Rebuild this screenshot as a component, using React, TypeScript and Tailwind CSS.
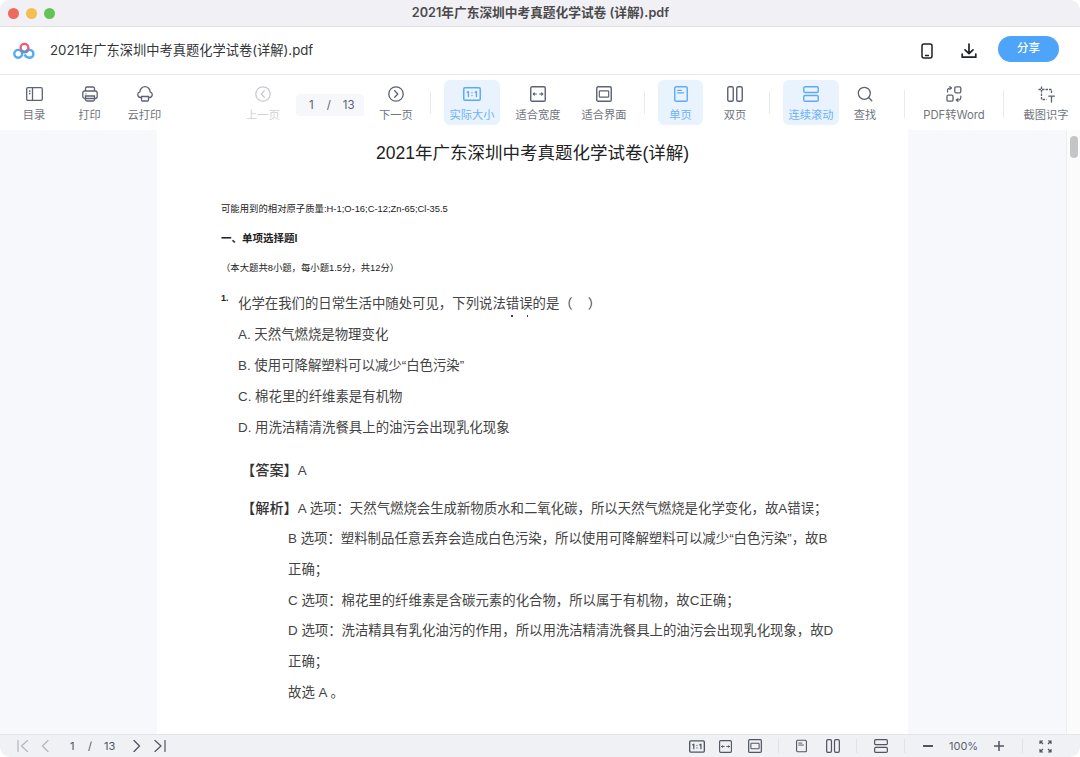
import React from "react";

const FONT = "[font-family:Inter,'Noto_Sans_CJK_SC',sans-serif]";
const DOC = "[font-family:'Liberation_Sans','Noto_Sans_CJK_SC',sans-serif]";

const OneOne = ({ small }: { small?: boolean }) => (
  <svg width={small ? 16 : 18} height={small ? 13 : 14} viewBox="0 0 18 14" fill="none">
    <rect x="0.75" y="0.75" width="16.5" height="12.5" rx="1.2" stroke="currentColor" strokeWidth="1.5" />
    <path d="M4.2 5.2 5.4 4.5v5M12.2 5.200l1.200-.7v5M9 5.600v.1M9 8.500v.1" stroke="currentColor" strokeWidth="1.4" strokeLinecap="round" strokeLinejoin="round" />
  </svg>
);
const FitWidth = ({ s = 16 }: { s?: number }) => (
  <svg width={s} height={s} viewBox="0 0 16 16" fill="none">
    <rect x="0.75" y="0.75" width="14.5" height="14.5" rx="1.3" stroke="currentColor" strokeWidth="1.4" />
    <path d="M3.200 8h3.300M9.500 8h3.300M3.200 8l1.200-1.200M3.200 8l1.200 1.200M12.800 8l-1.200-1.200M12.800 8l-1.200 1.200" stroke="currentColor" strokeWidth="1.100" strokeLinecap="round" />
  </svg>
);
const FitPage = ({ s = 16 }: { s?: number }) => (
  <svg width={s} height={s} viewBox="0 0 16 16" fill="none">
    <rect x="0.75" y="0.75" width="14.5" height="14.5" rx="1.3" stroke="currentColor" strokeWidth="1.4" />
    <rect x="3.300" y="4.800" width="9.400" height="6.400" rx="0.8" stroke="currentColor" strokeWidth="1.200" />
  </svg>
);
const Single = ({ w = 14, h = 16 }: { w?: number; h?: number }) => (
  <svg width={w} height={h} viewBox="0 0 14 16" fill="none">
    <rect x="0.75" y="0.75" width="12.5" height="14.5" rx="1.3" stroke="currentColor" strokeWidth="1.4" />
    <path d="M3.600 4.300h3.800M3.600 6.800h6" stroke="currentColor" strokeWidth="1.200" strokeLinecap="round" />
  </svg>
);
const Double = ({ w = 16, h = 16 }: { w?: number; h?: number }) => (
  <svg width={w} height={h} viewBox="0 0 16 16" fill="none">
    <rect x="0.75" y="0.75" width="5.500" height="14.5" rx="1.5" stroke="currentColor" strokeWidth="1.4" />
    <rect x="9.750" y="0.75" width="5.500" height="14.5" rx="1.5" stroke="currentColor" strokeWidth="1.4" />
  </svg>
);
const Scroll = ({ w = 16, h = 16 }: { w?: number; h?: number }) => (
  <svg width={w} height={h} viewBox="0 0 16 16" fill="none">
    <rect x="0.75" y="0.75" width="14.5" height="5.750" rx="1.3" stroke="currentColor" strokeWidth="1.4" />
    <rect x="0.75" y="9.500" width="14.5" height="5.750" rx="1.3" stroke="currentColor" strokeWidth="1.4" />
  </svg>
);

function Tool({ icon, label, w, ml = 0, active, faded }: { icon: React.ReactNode; label: string; w: number; ml?: number; active?: boolean; faded?: boolean }) {
  const color = active ? "text-[#5fa9f6] bg-[#e9f3fe]" : faded ? "text-[#c9cbd0]" : "text-[#5c6270]";
  const text = active ? "text-[#6db2f8]" : faded ? "text-[#d2d3d6]" : "text-[#70747c]";
  return (
    <div style={{ width: w, marginLeft: ml }} className={`h-[45px] rounded-md flex flex-col items-center shrink-0 ${color}`}>
      <div className="h-[28px] flex items-center justify-center">{icon}</div>
      <div className={`text-[11.25px] leading-[14px] whitespace-nowrap ${text}`}>{label}</div>
    </div>
  );
}
const Sep = ({ ml, tall }: { ml: number; tall?: boolean }) => (
  <div style={{ marginLeft: ml }} className={`w-px bg-[#e9eaec] shrink-0 ${tall ? "h-[28px] mt-[10px]" : "h-[23px] mt-[11px]"}`} />
);
const BarSep = ({ ml }: { ml: number }) => <div style={{ marginLeft: ml }} className="w-px h-[14px] bg-[#e2e3e7] shrink-0" />;

function Q({ children, cls = "", tight }: { children: React.ReactNode; cls?: string; tight?: boolean }) {
  return <div className={`text-[13.4px] ${tight ? "leading-[30.8px]" : "leading-[31px]"} text-[#444] whitespace-nowrap ${cls}`}>{children}</div>;
}
const Tag = ({ children }: { children: React.ReactNode }) => (
  <span className="text-[14.2px] font-medium text-[#333]">{children}</span>
);

export default function App() {
  return (
    <div className={`w-[1080px] h-[757px] bg-white overflow-hidden flex flex-col ${FONT}`}>
      <div className="h-[27px] shrink-0 bg-[#f1f0f4] border-b border-[#dfdfe1] rounded-t-[10px] flex items-center">
        <div className="flex items-center gap-[7px] ml-[8px]">
          <div className="w-[11px] h-[11px] rounded-full bg-[#ee6a5f]" />
          <div className="w-[11px] h-[11px] rounded-full bg-[#f5bf4f]" />
          <div className="w-[11px] h-[11px] rounded-full bg-[#61c554]" />
        </div>
        <div className="flex-1 text-center text-[12.7px] font-semibold text-[#4a4a4c] pr-[54px] pb-[1px] whitespace-nowrap">2021年广东深圳中考真题化学试卷 (详解).pdf</div>
      </div>

      <div className="h-[48px] shrink-0 border-b border-[#e8e8ea] flex items-center">
        <svg width="23" height="18" viewBox="0 0 23 18" fill="none" className="ml-[13px]">
          <circle cx="5.200" cy="11.800" r="3.900" stroke="#55aaf4" strokeWidth="2.400" />
          <path d="M11.500 12.500c1 2 2.800 3.200 5 3.200a3.900 3.900 0 1 0-3.600-5.400" stroke="#55aaf4" strokeWidth="2.400" />
          <circle cx="11.500" cy="5.800" r="3.900" stroke="#ea5f73" strokeWidth="2.400" />
          <path d="M8.200 8.500a3.900 3.900 0 0 0 6.600 0" stroke="#4c98e6" strokeWidth="2.400" />
        </svg>
        <div className="ml-[14px] text-[13.25px] text-[#333538] whitespace-nowrap">2021年广东深圳中考真题化学试卷(详解).pdf</div>
        <div className="flex-1" />
        <svg width="12" height="16" viewBox="0 0 12 16" fill="none" className="text-[#1f2227]">
          <rect x="1" y="1" width="10" height="14" rx="2" stroke="currentColor" strokeWidth="1.500" />
          <path d="M4.500 12.500h3" stroke="currentColor" strokeWidth="1.300" strokeLinecap="round" />
        </svg>
        <svg width="16" height="16" viewBox="0 0 16 16" fill="none" className="ml-[28px] text-[#1f2227]">
          <path d="M8 1v9M4 6.800l4 3.800 4-3.800M1.200 11v3.200h13.600V11" stroke="currentColor" strokeWidth="1.700" strokeLinecap="round" strokeLinejoin="round" />
        </svg>
        <div className="ml-[21px] mr-[21px] -mt-[3px] w-[61px] h-[26px] rounded-full bg-[#4ea4f8] text-white text-[11.5px] font-medium flex items-center justify-center">分享</div>
      </div>

      <div className="h-[55px] shrink-0 flex items-start pt-[5px]">
        <Tool w={56} ml={6} label="目录" icon={
          <svg width="17" height="14" viewBox="0 0 17 14" fill="none"><rect x="0.700" y="0.700" width="15.600" height="12.600" rx="1.200" stroke="currentColor" strokeWidth="1.300" /><path d="M6.500 1v12M3 4h1.500M3 6.500h1.500" stroke="currentColor" strokeWidth="1.300" /></svg>
        } />
        <Tool w={55} label="打印" icon={
          <svg width="16" height="16" viewBox="0 0 16 16" fill="none"><path d="M3.500 5V2.500A1.500 1.500 0 0 1 5 1h6a1.500 1.500 0 0 1 1.500 1.500V5" stroke="currentColor" strokeWidth="1.300" /><rect x="0.800" y="5" width="14.400" height="7.500" rx="2" stroke="currentColor" strokeWidth="1.300" /><path d="M3.500 10v3.500A1.500 1.500 0 0 0 5 15h6a1.500 1.500 0 0 0 1.500-1.500V10zM3.500 7.800h1" stroke="currentColor" strokeWidth="1.300" /></svg>
        } />
        <Tool w={55} label="云打印" icon={
          <svg width="16" height="16" viewBox="0 0 16 16" fill="none"><path d="M4 11.500H3.500a2.900 2.900 0 0 1-.6-5.700 5.100 5.100 0 0 1 10.200 0 2.900 2.900 0 0 1-.6 5.700H12" stroke="currentColor" strokeWidth="1.300" strokeLinecap="round" /><path d="M4.500 10.500h7v3.500a1 1 0 0 1-1 1h-5a1 1 0 0 1-1-1z" stroke="currentColor" strokeWidth="1.300" /></svg>
        } />
        <Tool w={56} ml={63} faded label="上一页" icon={
          <svg width="16" height="16" viewBox="0 0 16 16" fill="none"><circle cx="8" cy="8" r="7.200" stroke="currentColor" strokeWidth="1.300" /><path d="M9.300 4.800 6.200 8l3.100 3.200" stroke="currentColor" strokeWidth="1.300" strokeLinecap="round" strokeLinejoin="round" /></svg>
        } />
        <div className="ml-[5px] mt-[14px] w-[68px] h-[22px] rounded bg-[#f6f7fb] flex items-center text-[11.5px] text-[#5c6270] shrink-0 pt-[2px]">
          <span className="ml-[13px]">1</span><span className="ml-[13px]">/</span><span className="ml-[12px]">13</span>
        </div>
        <Tool w={56} ml={4} label="下一页" icon={
          <svg width="16" height="16" viewBox="0 0 16 16" fill="none"><circle cx="8" cy="8" r="7.200" stroke="currentColor" strokeWidth="1.300" /><path d="M6.700 4.800 9.800 8l-3.100 3.200" stroke="currentColor" strokeWidth="1.300" strokeLinecap="round" strokeLinejoin="round" /></svg>
        } />
        <Sep ml={6} />
        <Tool w={56} ml={13} active label="实际大小" icon={<OneOne />} />
        <Tool w={56} ml={10} label="适合宽度" icon={<FitWidth />} />
        <Tool w={56} ml={10} label="适合界面" icon={<FitPage />} />
        <Sep ml={12} />
        <Tool w={45} ml={13} active label="单页" icon={<Single />} />
        <Tool w={46} ml={9} label="双页" icon={<Double />} />
        <Sep ml={11} />
        <Tool w={56} ml={13} active label="连续滚动" icon={<Scroll />} />
        <Tool w={46} ml={3} label="查找" icon={
          <svg width="16" height="16" viewBox="0 0 16 16" fill="none"><circle cx="7.300" cy="7.300" r="6" stroke="currentColor" strokeWidth="1.300" /><path d="m11.800 11.800 3 3" stroke="currentColor" strokeWidth="1.300" strokeLinecap="round" /></svg>
        } />
        <Sep ml={16} tall />
        <Tool w={80} ml={9} label="PDF转Word" icon={
          <svg width="16" height="16" viewBox="0 0 16 16" fill="none"><rect x="8.800" y="0.800" width="6" height="6" rx="1.200" stroke="currentColor" strokeWidth="1.300" /><rect x="1" y="9.200" width="6" height="6" rx="1.200" stroke="currentColor" strokeWidth="1.300" /><path d="M1.500 6V4.500a2.500 2.500 0 0 1 2.500-2.500h1.500M3.800 0.600 5.600 2 3.800 3.400M14.800 10v1.500a2.500 2.500 0 0 1-2.500 2.500H10.500M12 12.600 10.200 14l1.800 1.400" stroke="currentColor" strokeWidth="1.200" strokeLinecap="round" strokeLinejoin="round" /></svg>
        } />
        <Sep ml={9} tall />
        <Tool w={56} ml={14} label="截图识字" icon={
          <svg width="17" height="17" viewBox="0 0 17 17" fill="none"><path d="M3.500 0.500v13h5M0.500 3.500h13v4" stroke="currentColor" strokeWidth="1.300" strokeDasharray="2.500 1" /><path d="M10.800 10.200h5.500M13.500 10.200v5.800" stroke="currentColor" strokeWidth="1.300" strokeLinecap="round" /></svg>
        } />
      </div>

      <div className="flex-1 min-h-0 flex bg-[#f7f8fc]">
        <div className="w-[157px] shrink-0" />
        <div className={`w-[751px] shrink-0 bg-white overflow-hidden relative ${DOC}`}>
          <div className="h-[47px] pt-[10px] text-center text-[17.5px] leading-[27px] text-[#222]">2021年广东深圳中考真题化学试卷(详解)</div>
          <div className="pl-[64px] text-[#222]">
            <div className="mt-[26px] text-[9.37px] leading-[12px] whitespace-nowrap">可能用到的相对原子质量:H-1;O-16;C-12;Zn-65;Cl-35.5</div>
            <div className="mt-[17px] text-[10.5px] leading-[13px] font-bold whitespace-nowrap">一、单项选择题I</div>
            <div className="mt-[17px] text-[9.35px] leading-[12px] whitespace-nowrap">（本大题共8小题，每小题1.5分，共12分）</div>
            <div className="flex mt-[14px] h-[32px]">
              <div className="text-[9px] leading-[10px] font-bold mt-[5px] w-[17px]">1.</div>
              <Q>化学在我们的日常生活中随处可见，下列说法错误的是（&nbsp;&nbsp;&nbsp;&nbsp;）</Q>
            </div>
            <div className="pl-[17px] -mt-[1px]">
              <Q>A. 天然气燃烧是物理变化</Q>
              <Q>B. 使用可降解塑料可以减少“白色污染”</Q>
              <Q>C. 棉花里的纤维素是有机物</Q>
              <Q>D. 用洗洁精清洗餐具上的油污会出现乳化现象</Q>
            </div>
            <div className="pl-[20px]">
              <Q cls="mt-[12px]"><Tag>【答案】</Tag>A</Q>
              <Q cls="mt-[7px]"><Tag>【解析】</Tag>A 选项：天然气燃烧会生成新物质水和二氧化碳，所以天然气燃烧是化学变化，故A错误；</Q>
            </div>
            <div className="pl-[67px]">
              <Q tight>B 选项：塑料制品任意丢弃会造成白色污染，所以使用可降解塑料可以减少“白色污染”，故B</Q>
              <Q tight>正确；</Q>
              <Q tight>C 选项：棉花里的纤维素是含碳元素的化合物，所以属于有机物，故C正确；</Q>
              <Q tight>D 选项：洗洁精具有乳化油污的作用，所以用洗洁精清洗餐具上的油污会出现乳化现象，故D</Q>
              <Q tight>正确；</Q>
              <Q tight>故选 A 。</Q>
            </div>
          </div>
          <div className="absolute left-[354px] top-[185px] flex gap-[14px]">
            <div className="w-[1.5px] h-[1.5px] bg-[#444]" />
            <div className="w-[1.5px] h-[1.5px] bg-[#444]" />
          </div>
        </div>
        <div className="flex-1" />
        <div className="w-[14px] shrink-0 bg-[#fbfbfc] border-l border-[#eeeef0] pt-[6px] flex justify-center">
          <div className="w-[8px] h-[22px] rounded-full bg-[#c4c5c7]" />
        </div>
      </div>

      <div className="h-[23px] shrink-0 bg-[#f0f1f5] border-t border-[#e6e6ea] rounded-b-[10px] flex items-center text-[#4f5563]">
        <svg width="12" height="12" viewBox="0 0 12 12" fill="none" className="ml-[17px] text-[#b4b6bc]"><path d="M1 0.500v11M10.500 0.500 4.500 6l6 5.500" stroke="currentColor" strokeWidth="1.200" strokeLinecap="round" strokeLinejoin="round" /></svg>
        <svg width="8" height="12" viewBox="0 0 8 12" fill="none" className="ml-[12px] text-[#b4b6bc]"><path d="M7 0.500 1.500 6 7 11.500" stroke="currentColor" strokeWidth="1.200" strokeLinecap="round" strokeLinejoin="round" /></svg>
        <span className="ml-[21px] text-[11px] w-[5px]">1</span>
        <span className="ml-[13px] text-[11px]">/</span>
        <span className="ml-[12px] text-[11px]">13</span>
        <svg width="8" height="12" viewBox="0 0 8 12" fill="none" className="ml-[18px]"><path d="M1 0.500 6.500 6 1 11.500" stroke="currentColor" strokeWidth="1.300" strokeLinecap="round" strokeLinejoin="round" /></svg>
        <svg width="12" height="12" viewBox="0 0 12 12" fill="none" className="ml-[13px]"><path d="M1 0.500 7 6l-6 5.500M11 0.500v11" stroke="currentColor" strokeWidth="1.200" strokeLinecap="round" strokeLinejoin="round" /></svg>
        <div className="flex-1" />
        <OneOne small />
        <div className="ml-[14px]"><FitWidth s={13} /></div>
        <div className="ml-[16px]"><FitPage s={14} /></div>
        <BarSep ml={16} />
        <div className="ml-[17px]"><Single w={11} h={14} /></div>
        <div className="ml-[19px]"><Double w={14} h={14} /></div>
        <BarSep ml={16} />
        <div className="ml-[17px]"><Scroll w={14} h={14} /></div>
        <BarSep ml={16} />
        <div className="ml-[18px] w-[10px] h-[1.500px] bg-current" />
        <span className="ml-[16px] w-[29px] text-[11px] text-[#5c6270]">100%</span>
        <svg width="10" height="10" viewBox="0 0 10 10" fill="none" className="ml-[16px]"><path d="M0 5h10M5 0v10" stroke="currentColor" strokeWidth="1.500" /></svg>
        <BarSep ml={18} />
        <svg width="13" height="13" viewBox="0 0 13 13" fill="none" className="ml-[16px] mr-[28px]"><path d="M1 4V1h3M9 1h3v3M12 9v3H9M4 12H1V9M1.500 1.500 4 4M11.500 1.500 9 4M11.500 11.500 9 9M1.500 11.500 4 9" stroke="currentColor" strokeWidth="1.200" /></svg>
      </div>
    </div>
  );
}
